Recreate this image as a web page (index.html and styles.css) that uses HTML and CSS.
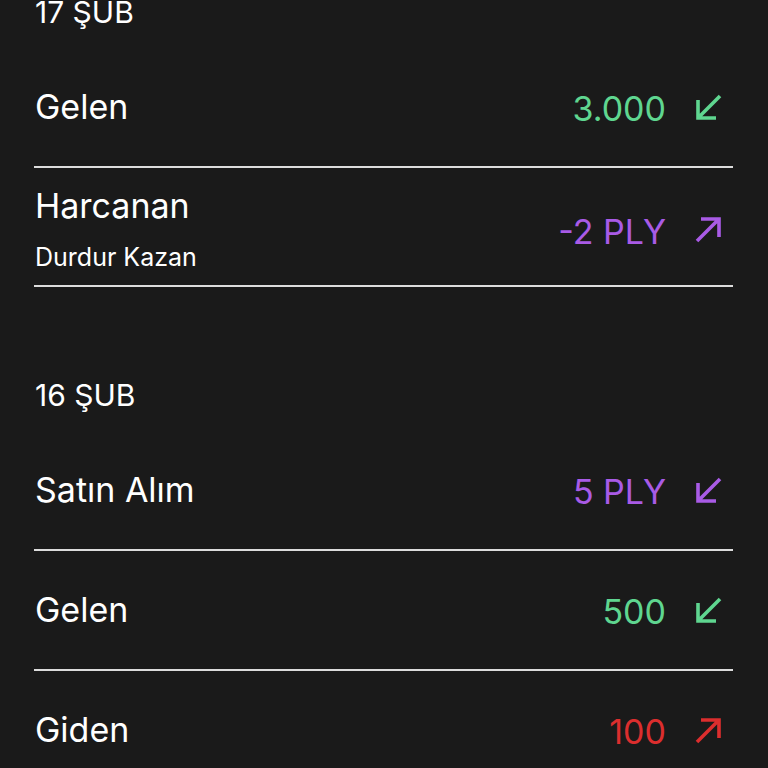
FILE: index.html
```html
<!DOCTYPE html>
<html lang="tr">
<head>
<meta charset="utf-8">
<link rel="stylesheet" href="styles.css">
</head>
<body>
<main class="list">
  <section class="day">
    <h2 class="day-title">17 ŞUB</h2>
    <div class="row">
      <div class="info"><div class="title">Gelen</div></div>
      <div class="amount green">3.000</div>
      <svg class="icon green" viewBox="0 0 27 27"><path d="M25 2L4 23M3 6V24H21"/></svg>
    </div>
    <div class="row two">
      <div class="info"><div class="title">Harcanan</div><div class="sub">Durdur Kazan</div></div>
      <div class="amount purple">-2 PLY</div>
      <svg class="icon purple" viewBox="0 0 27 27"><path d="M2 25L23 4M6 3H24V21"/></svg>
    </div>
  </section>
  <section class="day">
    <h2 class="day-title">16 ŞUB</h2>
    <div class="row">
      <div class="info"><div class="title">Satın Alım</div></div>
      <div class="amount purple">5 PLY</div>
      <svg class="icon purple" viewBox="0 0 27 27"><path d="M25 2L4 23M3 6V24H21"/></svg>
    </div>
    <div class="row">
      <div class="info"><div class="title">Gelen</div></div>
      <div class="amount green">500</div>
      <svg class="icon green" viewBox="0 0 27 27"><path d="M25 2L4 23M3 6V24H21"/></svg>
    </div>
    <div class="row">
      <div class="info"><div class="title">Giden</div></div>
      <div class="amount red">100</div>
      <svg class="icon red" viewBox="0 0 27 27"><path d="M2 25L23 4M6 3H24V21"/></svg>
    </div>
  </section>
</main>
</body>
</html>
```
FILE: styles.css
```css
html, body {
  margin: 0;
  padding: 0;
  background: #1a1a1a;
  height: 100%;
  overflow: hidden;
}
body {
  font-family: Inter, "Noto Sans", sans-serif;
  color: #ffffff;
}
.list {
  margin: 0 35px 0 34px;
}
.day + .day {
  margin-top: 96px;
}
.day-title {
  margin: 0 0 24px 1px;
  font-size: 30px;
  font-weight: 400;
  line-height: 24px;
}
.row {
  display: flex;
  align-items: center;
  padding: 40px 0;
  border-bottom: 2px solid #dcdcdc;
}
.row.two {
  padding: 19px 0 13px;
}
.info {
  flex: 1;
  padding-left: 1px;
}
.title {
  font-size: 34px;
  line-height: 38px;
}
.sub {
  font-size: 25px;
  line-height: 29px;
  margin-top: 18px;
}
.amount {
  font-size: 34px;
  line-height: 34px;
  padding-top: 4px;
}
.icon {
  width: 27px;
  height: 27px;
  margin-left: 29px;
  margin-right: 11px;
  fill: none;
  stroke: currentColor;
  stroke-width: 3.6;
}
.green { color: #5fd690; }
.purple { color: #a95be6; }
.red { color: #dc2e2e; }
```
